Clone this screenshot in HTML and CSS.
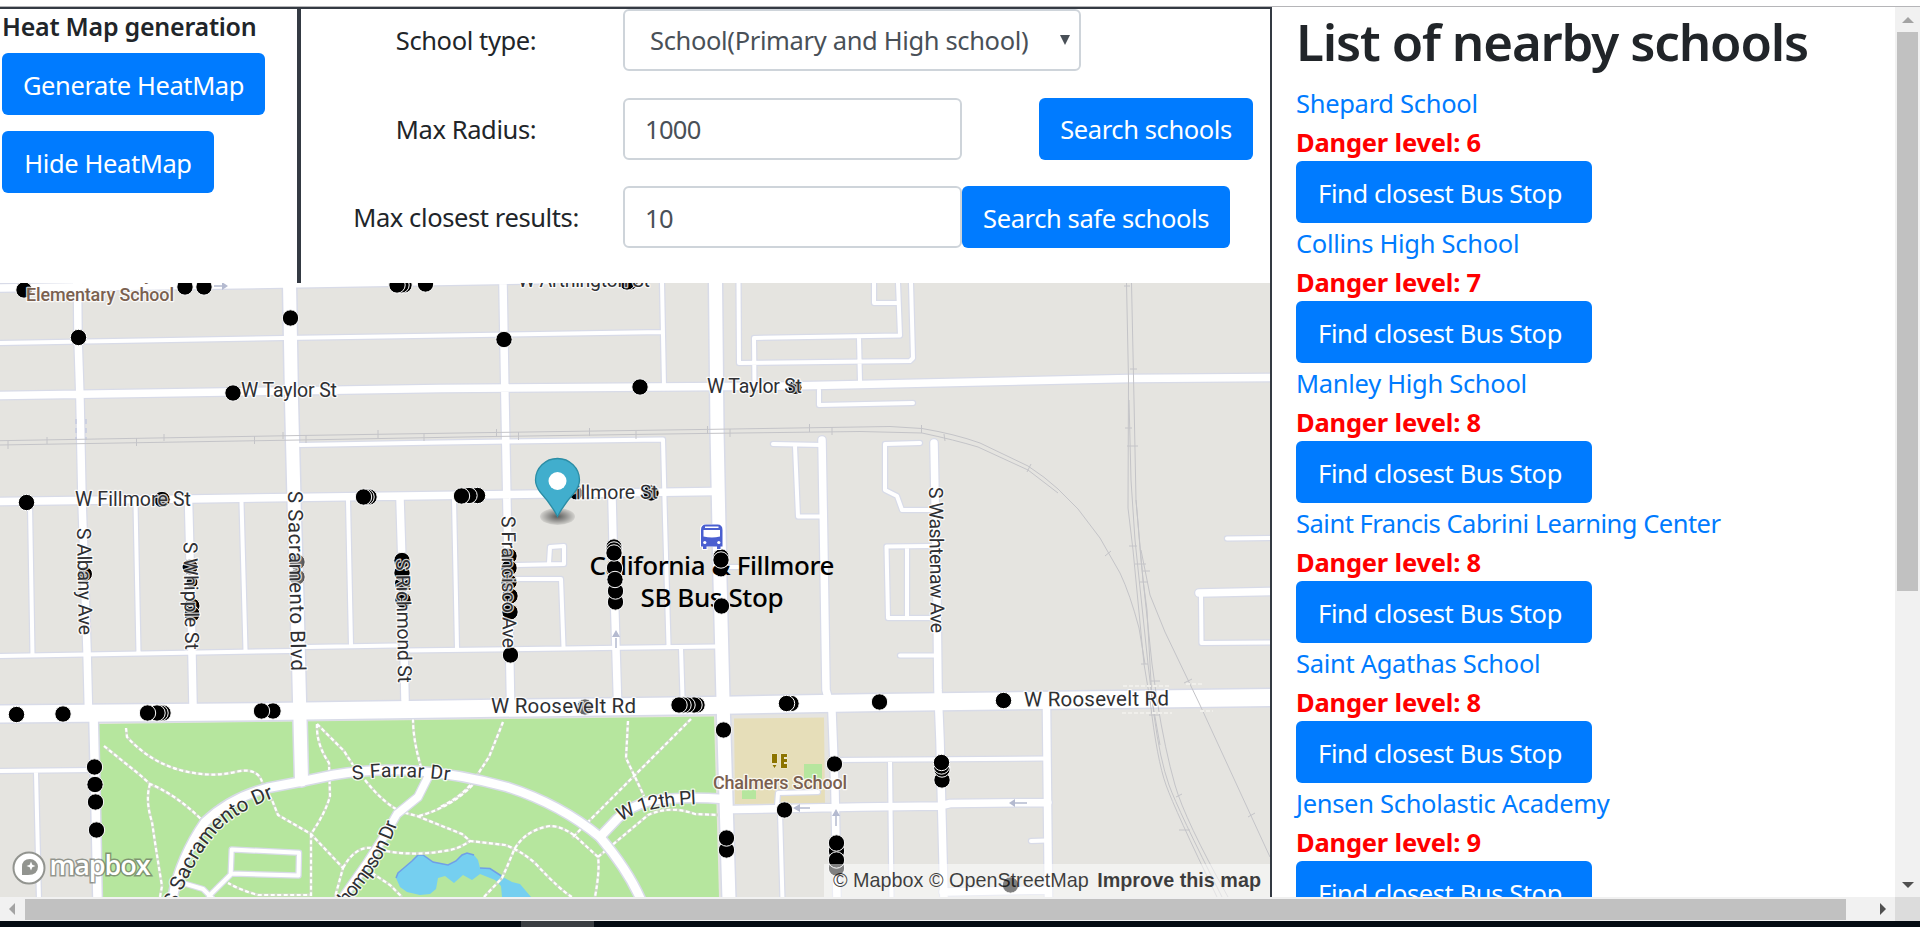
FILE: index.html
```html
<!DOCTYPE html>
<html lang="en">
<head>
<meta charset="utf-8">
<title>Nearby schools</title>
<link rel="stylesheet" href="styles.css">
</head>
<body>
<div class="viewport">
  <div class="page">
    <main class="left">
      <div class="controls">
        <section class="heat">
          <h2 class="heat-title">Heat Map generation</h2>
          <button class="btn btn-generate">Generate HeatMap</button>
          <button class="btn btn-hide">Hide HeatMap</button>
        </section>
        <form class="search">
          <label>School type:</label>
          <div class="cell"><div class="field select"><span>School(Primary and High school)</span><i class="caret"></i></div></div>
          <label>Max Radius:</label>
          <div class="cell spread"><div class="field">1000</div><button type="button" class="btn btn-search">Search schools</button></div>
          <label>Max closest results:</label>
          <div class="cell"><div class="field">10</div><button type="button" class="btn btn-safe">Search safe schools</button></div>
        </form>
      </div>
      <div class="map">
        <svg class="map-canvas" viewBox="0 283 1270 614" width="1270" height="614">
          <defs>
            <g id="r-thin">
              <path d="M0 343L284 338L480 335L663 332M300 445L440 442.500L663 439.500L665 520L668.500 645M0 656L290 651M306 647L396 645.500M405 650.500L715 646.500M662 283L664 386M30 505L32.500 655M135.500 503L138.500 653M241.500 502L245.500 650M348 500L351 645M454 499L457 648M681 648L682.500 697M515 579L561 579L563.500 647M517 565L564 564L564 546L550 547L549 563"/>
              <path d="M738.500 283L739 363L910 361L913 358L911 283M874 283L874 303L897 303M898 283L900 335.500L754 338L754.500 386M859 338L860 382M819 390L819 405L913 403M773 444L822 445M795 446L798 516.500L821 516.500M920 443L885 444L885 490L897 496L902 510L934 510M932 546L886.500 546.500L888 618L934 618M907 548L907 616M900 655.500L936 655.500M1227 538.500L1275 538M1201 595L1201.500 643L1275 642.500M722 567L738 567"/>
              <path d="M836 760L1046 758.500M890 760L891.500 900M1031 841L1046 840.500M780 812L782.500 900M818 792L778 793L777 806M0 771L92 770M36 772L39 900"/>
            </g>
            <g id="r-mid">
              <path d="M0 288L283 284L640 278M0 395.500L160 393L440 388.500L790 386L860 384.500L1130 378.500L1275 377.500M0 501.500L190 499L440 495.500L714 491.500M77.500 283L78 337L80 400L82 500L87 650L88.500 712M188.500 500L190.500 580L193 705M400 499L402.500 580L405 700M503 283L505 400L508 560L510.500 700M612 498L614.500 600L617.500 700M822 440L824 560L826 690L832 712L835 790L837 900M934 443L937 600L938 690L940 740L944 900M1199 593L1275 591.500M1046.500 708L1048.500 900M733 809.500L860 807L940 806L950 803.500L1048 802.500M943 892L1048 890"/>
              <path d="M428 777L418 797L397 814L385 835L367 863L341 900"/>
            </g>
            <g id="r-wide">
              <path d="M93.500 716L95.500 800L97.500 900"/>
              <path d="M172 900Q180 858 205 822Q230 798 267 788L304 781L333 775Q375 768 417 771T507 787Q560 804 600 837Q628 870 641 900"/>
              <path d="M600 837L617 819Q630 806 650 801Q680 796 724 799"/>
            </g>
            <g id="r-main"><path d="M289.500 283L291.500 400L294 500L297 600L299.500 700L301.500 780M715.500 283L717 430L720 580L723 700L729 900"/></g>
            <g id="r-art"><path d="M0 714L270 711.500L480 708.500L710 705.500L880 702.500L1275 697.500"/></g>
            <g id="r-loop"><path d="M231.700 849.500L299 852.700L298.500 875.500L230.700 873.500ZM230.700 874.500L209 896M186 884L203 889L212 898"/></g>
            <path id="p-sac" d="M176 908L183 889Q196 858 214 836Q232 813 276 797L300 790"/>
            <path id="p-thom" d="M340 914Q358 893 373 872Q388 850 398 822L402 808"/>
            <path id="p-far" d="M353 780Q400 773 460 782"/>
            <path id="p-12" d="M621 822Q645 805 705 804"/>
          </defs>
          <rect class="land" x="0" y="283" width="1270" height="614"/>
          <path class="park" d="M99 724L714 716.500L719 897L102 897Z"/>
          <path class="school-area" d="M734 718.500L824 717.500L825 803L735 804Z"/>
          <path class="park" d="M804 764h18v15h-18zM742 790h14v9h-14z"/>
          <path class="pond" d="M396 878L398 873L405 867L412 861L418 855L423 855L433 862L448 865L456 861L462 855L467 853L474 855L478 860L480 868L490 868.500L503 877L512 882L520 884L531 897H502L501 886L495 880L480 874L472 880L463 875L454 883L445 876L438 878L436 889L430 894L420 895L407 892L400 887Z"/>
          <path class="pond-edge" d="M396 878L398 873L405 867L412 861L418 855L423 855L433 862L448 865L456 861L462 855L467 853L474 855M480 868L490 868.500L503 877"/>
          <g class="trail">
            <path id="trails" d="M126 728L127 737Q150 762 180 770T235 772T263 786L272 800L278 815L311 834L343 868L335 897M104 746L140 775L150 784Q175 794 201 819M150 784Q145 800 152 822Q156 850 162 886L160 897M317 724Q316 744 329 763L330 796Q326 812 311 834L311 895H258Q240 890 228 883M317 724L344 751L353 765M413 719Q413 740 421 767M365 780Q385 805 402 812L417 816L462 834L470 841L505 845Q520 850 535 863Q560 890 572 897M419 816Q455 806 477 780M503 722L489 757L472 783Q460 798 440 807M343 868Q355 846 372 848Q410 858 450 850Q460 848 470 841M372 873L390 885L402 897M484 897L502 878Q508 865 514 850Q525 830 550 826Q562 826 575 836L598 857Q600 870 595 897M691 719L572 838M628 721L626 758L644 796M598 857L648 815Q670 805 695 814L718 815"/>
            <use href="#trails" class="trail-dash"/>
          </g>
          <g class="casing">
            <use href="#r-thin" class="c-thin"/><use href="#r-mid" class="c-mid"/><use href="#r-wide" class="c-wide"/><use href="#r-main" class="c-main"/><use href="#r-art" class="c-art"/><use href="#r-loop" class="c-thin"/>
          </g>
          <g class="road">
            <use href="#r-thin" class="f-thin"/><use href="#r-mid" class="f-mid"/><use href="#r-wide" class="f-wide"/><use href="#r-main" class="f-main"/><use href="#r-art" class="f-art"/><use href="#r-loop" class="f-thin"/>
          </g>
          <path class="tunnel" d="M76 419V440M86 419V440"/>
          <path class="rail" d="M0 440.700L300 435.500L480 432.700L700 429.500L890 426.500L922 428.500Q955 434 980 443L1028 466Q1045 477 1058 489L1078 509L1100 538L1120 573Q1130 594 1139 628L1145 664M0 445L300 440L480 436.700L700 433.500L860 431.500L922 433Q955 440 978 447L1028 470L1058 493"/>
          <path class="rail" d="M1126.500 283L1128.500 380L1128 508L1133 550L1144 664L1150 700Q1157 760 1166 785T1217 897M1131.500 283L1134 400L1136 500L1141 560L1152 664L1157 700Q1165 750 1175 785T1228 897M1129 400L1131 480L1135 540L1148 664L1154 715Q1160 760 1169 785T1222 897M1136 500L1143 580L1147 610L1152 700L1160 745M1141 550L1150 595L1165 632L1200 705L1270 857"/>
          <path class="rail" d="M8 441v8M47 437v7M136.500 438v8M164 434v7M254.500 436v8M283 432v7M306 435v8M378 430v8M424 433v8M496.500 429v8M518.500 432v8M589.500 428v8M636 431v8M707.500 426v8M730 429v8M809.500 424v8M832 427v8M921.500 425v8M944 434l1 7M1027 472l4-8M1105 556l6-5M1124 286h6M1130 369h7M1125 428h7M1127 446h11M1129 546h8M1135 564h11M1143 571h7M1140 582h8M1141 664h7M1150 681h10M1149 715h10M1184 683l8-4M1176 797l6-3M1179 830h11M1248 817l7-4"/>
          <path class="bridge" d="M1123 686H1170M1186 684H1202M1122 713H1172M1200 711h13"/>
          <g class="arrow">
            <path d="M214 286h9M616 648V638M1014 803h13M810 808h-10M836 826V816"/>
            <path class="arrow-head" d="M228 286l-6-4v8zM616 630l-4 7h8zM1009 803l6-4v8zM793 808l7-4v8zM836 809l-4 7h8z"/>
          </g>
          <g class="dots">
            <circle cx="24" cy="290" r="8.200"/><circle cx="185" cy="287" r="8.200"/><circle cx="204" cy="287" r="8.200"/><circle cx="290.500" cy="318" r="8.200"/><circle cx="78.500" cy="337.500" r="8.200"/><circle cx="233" cy="393" r="8.200"/><circle cx="26.500" cy="502.500" r="8.200"/><circle cx="162" cy="499.500" r="8.200"/>
            <circle cx="404" cy="285" r="8.200"/><circle cx="401" cy="285" r="8.200"/><circle cx="397" cy="285" r="8.200"/><circle cx="425.500" cy="284" r="8.200"/><circle cx="630" cy="282" r="8.200"/><circle cx="627" cy="282" r="8.200"/>
            <circle cx="369" cy="497" r="8.200"/><circle cx="366" cy="497" r="8.200"/><circle cx="363.500" cy="497" r="8.200"/>
            <circle cx="477.500" cy="495.500" r="8.200"/><circle cx="469" cy="495.500" r="8.200"/><circle cx="461.500" cy="496" r="8.200"/>
            <circle cx="640" cy="387" r="8.200"/><circle cx="504" cy="339.500" r="8.200"/><circle cx="795" cy="387.500" r="7"/><circle cx="651" cy="493" r="8.200"/><circle cx="576" cy="493" r="7"/>
            <circle cx="85" cy="574" r="7.500"/><circle cx="190" cy="567" r="8"/><circle cx="192" cy="582" r="6"/><circle cx="192" cy="606" r="8"/><circle cx="192" cy="614" r="8"/>
            <circle class="faint" cx="297" cy="562" r="8.200"/><circle class="faint" cx="297" cy="577" r="8.200"/>
            <circle cx="403" cy="600" r="8.200"/><circle cx="402.500" cy="584" r="8.200"/><circle cx="402" cy="573" r="8.200"/><circle cx="402" cy="560.500" r="8.200"/>
            <circle cx="509" cy="556" r="8.200"/><circle cx="509" cy="568" r="8.200"/><circle cx="509" cy="582" r="8.200"/><circle cx="510" cy="596" r="8.200"/><circle cx="510" cy="612" r="8.200"/><circle cx="510.500" cy="655" r="8.200"/>
            <circle cx="615.500" cy="602" r="8.200"/><circle cx="614" cy="547" r="8.200"/><circle cx="614" cy="550" r="8.200"/>
            <circle cx="721" cy="570" r="7"/><circle cx="721" cy="557" r="8.200"/>
            <circle cx="723.500" cy="730" r="8.200"/><circle cx="726.500" cy="850" r="8.200"/><circle cx="726.500" cy="838" r="8.200"/>
            <circle cx="16.500" cy="714.500" r="8.200"/><circle cx="63" cy="714" r="8.200"/><circle cx="163" cy="713" r="8.200"/><circle cx="160" cy="713" r="8.200"/><circle cx="157" cy="713" r="8.200"/><circle cx="147.500" cy="713" r="8.200"/><circle cx="273" cy="711" r="8.200"/><circle cx="261.500" cy="711" r="8.200"/>
            <circle class="faint" cx="585" cy="707" r="8.200"/><circle cx="697" cy="705" r="8.200"/><circle cx="694" cy="705" r="8.200"/><circle cx="687" cy="705" r="8.200"/><circle cx="683" cy="705" r="8.200"/><circle cx="679" cy="705" r="8.200"/><circle cx="791" cy="703.500" r="8.200"/><circle cx="786.500" cy="703.500" r="8.200"/><circle cx="879.500" cy="702" r="8.200"/><circle cx="1003.500" cy="700.500" r="8.200"/>
            <circle cx="834.500" cy="764" r="8.200"/><circle cx="784.500" cy="810" r="8.200"/><circle cx="836.500" cy="868" r="8.200"/><circle cx="836.500" cy="851" r="8.200"/><circle cx="836.500" cy="843" r="8.200"/><circle cx="836.500" cy="860" r="8.200"/>
            <circle cx="942" cy="780" r="8.200"/><circle cx="942" cy="769" r="8.200"/><circle cx="941.500" cy="766" r="8.200"/><circle cx="941.500" cy="762.500" r="8.200"/><circle cx="94.500" cy="767" r="8.200"/><circle cx="95" cy="784.500" r="8.200"/><circle cx="95.500" cy="802" r="8.200"/><circle cx="96.500" cy="830" r="8.200"/><circle cx="1010.500" cy="885" r="8.200"/>
          </g>
          <g class="label">
            <text x="518" y="287" textLength="132">W Arthington St</text>
            <text x="241" y="397" textLength="96">W Taylor St</text>
            <text x="707" y="393" textLength="95">W Taylor St</text>
            <text x="75" y="506" textLength="116">W Fillmore St</text>
            <text x="543" y="499" textLength="115" transform="rotate(-.5 600 499)">W Fillmore St</text>
            <text transform="translate(77 528) rotate(89)" textLength="107">S Albany Ave</text>
            <text transform="translate(183.500 542) rotate(89)" textLength="108">S Whipple St</text>
            <text transform="translate(288 491) rotate(89)" class="big" textLength="180">S Sacramento Blvd</text>
            <text transform="translate(396 559) rotate(89)" textLength="124">S Richmond St</text>
            <text transform="translate(501.500 516) rotate(89.500)" textLength="132">S Francisco Ave</text>
            <text transform="translate(929 487) rotate(89.300)" textLength="146">S Washtenaw Ave</text>
            <text x="491" y="713" class="big" textLength="145">W Roosevelt Rd</text>
            <text x="1024" y="706.500" class="big" textLength="145" transform="rotate(-.4 1024 706)">W Roosevelt Rd</text>
            <text textLength="97"><textPath href="#p-far">S Farrar Dr</textPath></text>
            <text textLength="78"><textPath href="#p-12">W 12th Pl</textPath></text>
            <text class="big" textLength="154"><textPath href="#p-sac">S Sacramento Dr</textPath></text>
            <text textLength="108"><textPath href="#p-thom">Thompson Dr</textPath></text>
            <text x="60" y="280" class="brown">Community</text>
            <text x="26" y="301" class="brown" textLength="148">Elementary School</text>
            <text x="713" y="789" class="brown" textLength="134">Chalmers School</text>
          </g>
          <path class="school-icon" d="M772 754h5v9h-5zM772.500 765h4l-2 3zM781 754h6v3h-3v2h3v3h-3v2h3v4h-6z"/>
          <g class="stop">
            <text x="589.500" y="575" textLength="245">California &amp; Fillmore</text>
            <text x="640.500" y="606.500" textLength="143">SB Bus Stop</text>
          </g>
          <g class="dots"><circle cx="614.500" cy="568" r="8.200"/><circle cx="614" cy="553" r="8.200"/><circle cx="615.500" cy="602" r="8.200"/><circle cx="615.500" cy="591" r="8.200"/><circle cx="615" cy="579.500" r="8.200"/><circle cx="721" cy="560" r="8.200"/><circle cx="721.500" cy="606" r="8.200"/></g>
          <g class="bus">
            <path class="bus-halo" d="M701 529Q701 525 706 525H717Q722.500 525 722.500 529V546H720.500V549H717V546H706.500V549H703V546H701Z"/>
            <path class="bus-body" d="M701 530Q701 524.500 706 524.500H717.500Q722.500 524.500 722.500 530V546.500H720.500V549H717V546.500H706.500V549H703V546.500H701Z"/>
            <path class="bus-glass" d="M705 526.500h13.500v1.500h-13.500zM703.500 530h16.500v6.500q-8 2-16.500 0z"/>
            <circle class="bus-glass" cx="704.800" cy="542.500" r="1.600"/><circle class="bus-glass" cx="718.800" cy="542.500" r="1.600"/>
          </g>
          <g class="marker">
            <defs><radialGradient id="shade"><stop offset="0" stop-opacity=".6"/><stop offset=".5" stop-opacity=".35"/><stop offset="1" stop-opacity=".08"/></radialGradient></defs>
            <ellipse cx="557.500" cy="516.500" rx="17.500" ry="8.500" fill="url(#shade)"/>
            <path class="pin" d="M557.500 516.500Q551 504 540.500 492.500Q535.500 486 535.500 480A22 21.500 0 0 1 579.500 480Q579.500 486 574.500 492.500Q564 504 557.500 516.500Z"/>
            <circle class="pin-hole" cx="557.500" cy="481" r="9"/>
          </g>
          <g class="logo">
            <circle class="logo-disc" cx="29" cy="868" r="15.500"/>
            <path class="logo-mark" d="M22 875V867Q22 859 30 859A8 8 0 0 1 38 866.500Q38 875 28 875Z"/>
            <path class="logo-star" d="M31 861.500L32.300 864.700L35.500 866L32.300 867.300L31 870.500L29.700 867.300L26.500 866L29.700 864.700Z"/>
            <text class="logo-text" x="49.500" y="874.500" textLength="101">mapbox</text>
          </g>
        </svg>
        <div class="attribution"><span>© Mapbox © OpenStreetMap</span><b>Improve this map</b></div>
      </div>
    </main>
    <aside class="schools">
      <h1>List of nearby schools</h1>
      <ul class="list">
        <li><a>Shepard School</a><strong>Danger level: 6</strong><button class="btn btn-stop">Find closest Bus Stop</button></li>
        <li><a>Collins High School</a><strong>Danger level: 7</strong><button class="btn btn-stop">Find closest Bus Stop</button></li>
        <li><a>Manley High School</a><strong>Danger level: 8</strong><button class="btn btn-stop">Find closest Bus Stop</button></li>
        <li><a class="long">Saint Francis Cabrini Learning Center</a><strong>Danger level: 8</strong><button class="btn btn-stop">Find closest Bus Stop</button></li>
        <li><a>Saint Agathas School</a><strong>Danger level: 8</strong><button class="btn btn-stop">Find closest Bus Stop</button></li>
        <li><a>Jensen Scholastic Academy</a><strong>Danger level: 9</strong><button class="btn btn-stop">Find closest Bus Stop</button></li>
      </ul>
    </aside>
    <div class="vbar"><i class="tri up"></i><div class="vthumb"></div><i class="tri down"></i></div>
  </div>
  <div class="hbar"><i class="tri prev"></i><div class="hthumb"></div><i class="tri next"></i><div class="corner"></div></div>
  <div class="taskbar"><div class="task-active"></div></div>
</div>
</body>
</html>
```
FILE: styles.css
```css
* { box-sizing: border-box; }
body { margin: 0; overflow: hidden; background: #fff; color: #212529; font: 25.500px/39px "Noto Sans", "Open Sans", sans-serif; letter-spacing: -.4px; }
.viewport { width: 1920px; height: 927px; padding-top: 6px; display: flex; flex-direction: column; overflow: hidden; }
.page { display: flex; height: 891px; border-top: 1px solid #b5b5b8; overflow: hidden; }
.left { width: 1272px; flex: none; border-top: 2px solid #343a43; border-right: 2px solid #343a43; }
.controls { display: flex; height: 274px; }
.heat { width: 301px; border-right: 4px solid #343a43; padding-left: 2px; display: flex; flex-direction: column; align-items: flex-start; }
.heat-title { margin: 0 0 10px; height: 34px; line-height: 34px; font-size: 25px; font-weight: 600; letter-spacing: -.25px; white-space: nowrap; }
.btn { display: flex; align-items: center; justify-content: center; height: 62px; padding: 2px 0 0; border: 0; border-radius: 6px; background: #007bff; color: #fff; font: inherit; letter-spacing: inherit; white-space: nowrap; }
.btn-generate { width: 263px; margin-bottom: 16px; }
.btn-hide { width: 212px; }
.search { flex: 1; display: grid; grid-template-columns: 322px 1fr; grid-template-rows: 62px 62px 62px; row-gap: 26.500px; align-items: center; margin: 0; padding-right: 17px; }
.search label { text-align: center; padding: 1px 0 0 8px; }
.cell { display: flex; }
.spread { justify-content: space-between; }
.field { width: 339px; height: 62px; padding: 2px 0 0 20px; border: 2px solid #ced4da; border-radius: 6px; display: flex; align-items: center; color: #495057; letter-spacing: -.7px; }
.select { width: 458px; padding: 0 9px 0 25px; justify-content: space-between; letter-spacing: -.35px; }
.caret { border: 5px solid transparent; border-top: 10px solid #495057; border-bottom: 0; }
.btn-search { width: 214px; }
.btn-safe { width: 268px; }

.map { position: relative; height: 614px; overflow: hidden; }
.map-canvas { display: block; letter-spacing: 0; }
.map-canvas path { fill: none; }
.map-canvas .land { fill: #e5e4e0; }
.map-canvas .park { fill: #b6e69e; }
.map-canvas .school-area { fill: #e6deb9; }
.map-canvas .pond { fill: #75cff0; }
.pond-edge { stroke: #6f9fe8; stroke-width: 1.500; }
.trail { stroke: #cfd9c6; stroke-width: 3; }
.trail-dash { stroke: #fff; stroke-width: 2.200; stroke-dasharray: 4 2.500; }
.casing { stroke: #d8dbe8; stroke-linejoin: round; stroke-linecap: round; }
.road { stroke: #fff; stroke-linejoin: round; stroke-linecap: round; }
.c-thin { stroke-width: 6.500; }
.f-thin { stroke-width: 4; }
.c-mid { stroke-width: 10; }
.f-mid { stroke-width: 7.500; }
.c-wide { stroke-width: 11.500; }
.f-wide { stroke-width: 8.500; }
.c-main { stroke-width: 16; }
.f-main { stroke-width: 13; }
.c-art { stroke-width: 20; }
.f-art { stroke-width: 17; }
.tunnel { stroke: #c5cae0; stroke-width: 1.500; stroke-dasharray: 5 4; }
.rail { stroke: #c4c4c8; stroke-width: 1; }
.bridge { stroke: #f0efeb; stroke-width: 2; stroke-dasharray: 4 2; }
.arrow { stroke: #b4bad0; stroke-width: 1.500; }
.map-canvas .arrow-head { fill: #b4bad0; stroke: none; }
.dots { fill: #000; stroke: #fff; stroke-width: 1; }
.faint { opacity: .6; }
.label { font: 19.500px Roboto, sans-serif; fill: #2f3033; stroke: rgba(255,255,255,.8); stroke-width: 2.500; stroke-linejoin: round; paint-order: stroke; }
.big { font-size: 20.500px; }
.brown { fill: #7a6050; font-size: 18px; font-weight: 500; }
.map-canvas .school-icon { fill: #8c7400; stroke: #f2ecd0; stroke-width: 1; paint-order: stroke; }
.stop { font: 500 26px "Noto Sans", sans-serif; fill: #000; }
.map-canvas .bus-halo { stroke: #fff; stroke-width: 2; fill: #fff; }
.map-canvas .bus-body { fill: #4a5fd0; }
.map-canvas .bus-glass { fill: #fff; }
.map-canvas .pin { fill: #41aecd; stroke: #2b8da5; stroke-width: 1.300; }
.pin-hole { fill: #fff; }
.logo-disc { fill: #fff; stroke: #92948f; stroke-width: 2; }
.map-canvas .logo-mark { fill: #92948f; }
.map-canvas .logo-star { fill: #fff; }
.logo-text { font: 600 27px "Open Sans", sans-serif; fill: #fff; stroke: rgba(90,95,85,.6); stroke-width: 3; paint-order: stroke; }
.attribution { position: absolute; right: 0; bottom: 0; width: 446px; height: 33px; padding: 0 9px; background: rgba(255,255,255,.5); color: rgba(0,0,0,.75); font: 19.800px/32px "Liberation Sans", sans-serif; letter-spacing: 0; display: flex; justify-content: space-between; white-space: nowrap; }

.schools { width: 623px; flex: none; padding-left: 24px; overflow: hidden; }
.schools h1 { margin: 0; height: 77px; padding-top: 2px; font-size: 51px; line-height: 64px; font-weight: 600; letter-spacing: -1.150px; white-space: nowrap; }
.list { margin: 0; padding: 0; list-style: none; }
.list li { height: 140.100px; display: flex; flex-direction: column; align-items: flex-start; }
.list a { color: #007bff; height: 39px; white-space: nowrap; letter-spacing: -.3px; }
.list .long { letter-spacing: -.5px; }
.list strong { color: #f00; height: 38px; white-space: nowrap; letter-spacing: -.2px; }
.btn-stop { width: 296px; padding-right: 8px; flex: none; }

.vbar { width: 25px; flex: none; background: #f1f1f1; display: flex; flex-direction: column; align-items: center; padding: 10px 0 9px; }
.vthumb { width: 21px; height: 559px; margin: 9px 0 auto; background: #c1c1c1; }
.tri { border: 6px solid transparent; flex: none; }
.up { border-top: 0; border-bottom-color: #a3a3a3; }
.down { border-bottom: 0; border-top-color: #505050; }
.prev { border-left: 0; border-right-color: #a3a3a3; }
.next { border-right: 0; border-left-color: #505050; }
.hbar { height: 24px; flex: none; background: #f1f1f1; display: flex; align-items: center; padding-left: 9px; }
.hthumb { width: 1821px; height: 21px; margin-left: 10px; background: #c1c1c1; }
.next { margin-left: 34px; }
.corner { margin-left: auto; width: 25px; height: 24px; background: #dcdcdc; }
.taskbar { height: 6px; flex: none; background: #040b12; padding-left: 521px; }
.task-active { width: 73px; height: 6px; background: #3a3e42; }
```
